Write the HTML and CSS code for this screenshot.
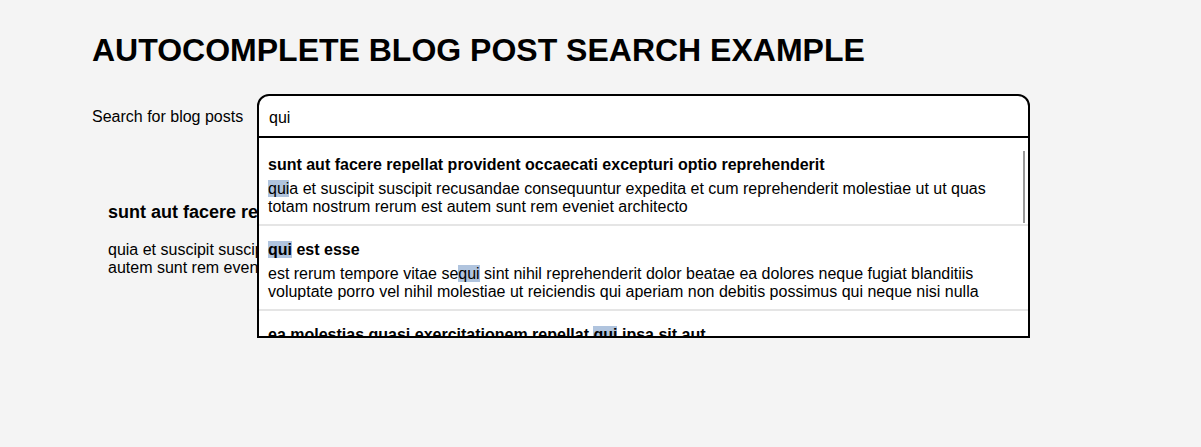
FILE: index.html
```html
<!DOCTYPE html>
<html lang="en">
<head>
<meta charset="utf-8">
<title>Autocomplete blog post search example</title>
<link rel="stylesheet" href="styles.css">
</head>
<body>
<main class="page">
  <h1 class="title">AUTOCOMPLETE BLOG POST SEARCH EXAMPLE</h1>
  <div class="search-row">
    <label class="search-label" for="q">Search for blog posts</label>
    <div class="search-box">
      <input id="q" class="search-input" type="text" value="qui" autocomplete="off">
      <div class="dropdown">
        <ul class="results">
          <li class="result">
            <div class="result-title">sunt aut facere repellat provident occaecati excepturi optio reprehenderit</div>
            <div class="result-body"><mark>qui</mark>a et suscipit suscipit recusandae consequuntur expedita et cum reprehenderit molestiae ut ut quas totam nostrum rerum est autem sunt rem eveniet architecto</div>
          </li>
          <li class="result">
            <div class="result-title"><mark>qui</mark> est esse</div>
            <div class="result-body">est rerum tempore vitae se<mark>qui</mark> sint nihil reprehenderit dolor beatae ea dolores neque fugiat blanditiis voluptate porro vel nihil molestiae ut reiciendis qui aperiam non debitis possimus qui neque nisi nulla</div>
          </li>
          <li class="result">
            <div class="result-title">ea molestias quasi exercitationem repellat <mark>qui</mark> ipsa sit aut</div>
            <div class="result-body">et iusto sed quo iure voluptatem occaecati omnis eligendi aut ad voluptatem doloribus vel accusantium <mark>qui</mark>s pariatur molestiae porro eius odio et labore et velit aut</div>
          </li>
          <li class="result">
            <div class="result-title">eum et est occaecati</div>
            <div class="result-body">ullam et saepe reiciendis voluptatem adipisci sit amet autem assumenda provident rerum culpa <mark>qui</mark>s hic commodi nesciunt rem tenetur doloremque ipsam iure quis sunt voluptatem rerum illo velit</div>
          </li>
          <li class="result">
            <div class="result-title">nesciunt quas odio</div>
            <div class="result-body">repudiandae veniam quaerat sunt sed alias aut fugiat sit autem sed est voluptatem omnis possimus esse voluptatibus <mark>qui</mark>s est aut tenetur dolor neque</div>
          </li>
        </ul>
        <div class="scroll-thumb"></div>
      </div>
    </div>
  </div>
  <article class="post">
    <h2 class="post-title">sunt aut facere repellat provident occaecati excepturi optio reprehenderit</h2>
    <p class="post-body">quia et suscipit suscipit recusandae consequuntur expedita et cum reprehenderit molestiae ut ut quas totam nostrum rerum est autem sunt rem eveniet architecto</p>
  </article>
</main>
</body>
</html>
```
FILE: styles.css
```css
html,
body {
  margin: 0;
  background: #f4f4f4;
}

body {
  color: #000;
  font-family: "Liberation Sans", Arial, sans-serif;
}

.page {
  box-sizing: border-box;
  min-height: 100vh;
  padding: 32px 0 0 92px;
}

.title {
  margin: 0;
  font-size: 32px;
  font-weight: 700;
  line-height: normal;
}

.search-row {
  display: flex;
  align-items: center;
  margin-top: 25px;
}

.search-label {
  flex: none;
  width: 165px;
  padding-top: 1px;
  font-size: 16px;
}

.search-box {
  position: relative;
  width: 773px;
}

.search-input {
  display: block;
  box-sizing: border-box;
  width: 100%;
  height: 44px;
  margin: 0;
  padding: 4px 10px 0;
  border: 2px solid #000;
  border-radius: 12px 12px 0 0;
  background: #fff;
  color: #000;
  font: 16px "Liberation Sans", Arial, sans-serif;
  outline: none;
}

.dropdown {
  position: absolute;
  top: 100%;
  left: 0;
  right: 0;
  z-index: 2;
  box-sizing: border-box;
  height: 200px;
  border: 2px solid #000;
  border-top: 0;
  background: #fff;
  overflow: hidden;
}

.results {
  box-sizing: border-box;
  list-style: none;
  margin: 0;
  padding: 3px 0 0;
  height: 100%;
  overflow-y: auto;
  scrollbar-width: none;
}

.result {
  padding: 15px 9px 8px;
  border-bottom: 2px solid #e5e5e5;
  font-size: 16px;
}

.result-title {
  font-weight: 700;
  margin-bottom: 6px;
}

.result-body {
  line-height: normal;
}

mark {
  background: #b0c4de;
  color: inherit;
}

.scroll-thumb {
  position: absolute;
  top: 13px;
  right: 3px;
  width: 2px;
  height: 72px;
  background: #999;
}

.post {
  box-sizing: border-box;
  width: 940px;
  margin-top: 48px;
  padding: 16px;
}

.post-title {
  margin: 0 0 18px;
  font-size: 18px;
  font-weight: 700;
  line-height: normal;
}

.post-body {
  margin: 0;
  font-size: 16px;
  width: 940px;
}
```
